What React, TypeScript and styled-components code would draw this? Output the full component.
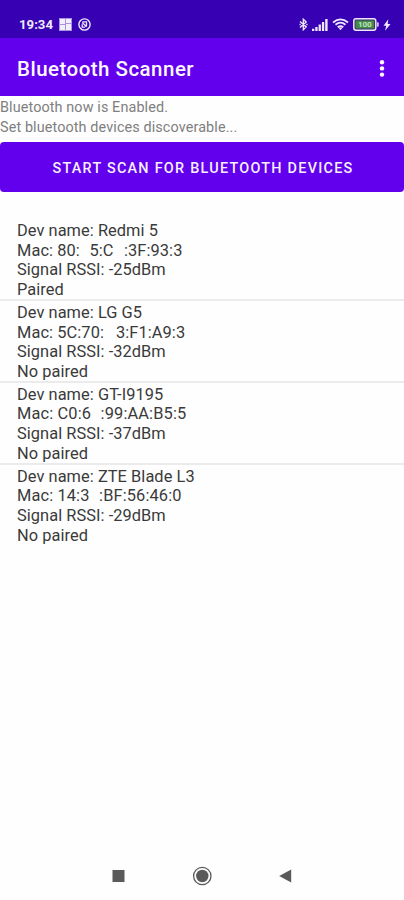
import React from "react";
import styled, { createGlobalStyle } from "styled-components";

const GlobalStyle = createGlobalStyle`
  * { box-sizing: border-box; }
  body { margin: 0; background: #fefefe; }
`;

const Screen = styled.div`
  width: 404px;
  height: 900px;
  display: flex;
  flex-direction: column;
  overflow: hidden;
  background: #fefefe;
  font-family: Roboto, sans-serif;
`;

const StatusBar = styled.header`
  height: 38px;
  flex: none;
  display: flex;
  align-items: center;
  justify-content: space-between;
  padding: 11px 13px 0 19px;
  background: #3700b3;
  color: #f0e8ff;
`;

const StatusGroup = styled.div<{ $gap: number }>`
  display: flex;
  align-items: center;
  gap: ${({ $gap }) => $gap}px;
  svg { display: block; flex: none; }
`;

const Clock = styled.span`
  width: 34px;
  font-size: 13.2px;
  font-weight: 700;
  line-height: 14px;
  white-space: nowrap;
`;

const AppBar = styled.div`
  height: 58px;
  flex: none;
  display: flex;
  align-items: center;
  justify-content: space-between;
  padding: 3px 19px 0 17px;
  background: #6200ee;
  color: #fdf8ff;
`;

const Title = styled.h1`
  margin: 0;
  padding-top: 1px;
  font-size: 20.5px;
  font-weight: 500;
  line-height: 28px;
  letter-spacing: 0.48px;
  white-space: nowrap;
`;

const MenuButton = styled.button`
  width: 6px;
  height: 20px;
  padding: 0;
  border: 0;
  background: none;
  color: inherit;
  svg { display: block; }
`;

const Messages = styled.div`
  height: 46px;
  flex: none;
  padding-top: 2px;
  color: #7f7f7f;
`;

const Message = styled.p`
  margin: 0;
  font-size: 14.4px;
  line-height: 20px;
  letter-spacing: 0.11px;
  white-space: nowrap;
`;

const ScanButton = styled.button`
  height: 50px;
  flex: none;
  border: 0;
  border-radius: 4px;
  padding: 3px 0 0 2px;
  background: #6200ee;
  color: #f8f0ff;
  font: 500 14.4px/20px Roboto, sans-serif;
  letter-spacing: 1.26px;
  text-transform: uppercase;
  white-space: nowrap;
`;

const DeviceList = styled.ul`
  flex: 1;
  margin: 27px 0 0;
  padding: 0;
  list-style: none;
`;

const Device = styled.li`
  height: 81.9px;
  padding: 2.1px 17px 0;
  border-bottom: 2px solid #ebebeb;
  color: #3a3a3a;
  &:last-child { border-bottom: 0; }
`;

const DeviceLine = styled.div<{ $spacing?: number }>`
  font-size: 16.4px;
  line-height: 19.6px;
  letter-spacing: ${({ $spacing = 0.05 }) => $spacing}px;
  white-space: pre;
`;

const MacGap = styled.span<{ $width: number }>`
  display: inline-block;
  width: ${({ $width }) => $width}px;
`;

const NavBar = styled.nav`
  height: 48px;
  flex: none;
  display: flex;
  justify-content: space-between;
  align-items: center;
  padding: 0 111px;
  color: #5a5a5a;
  svg { display: block; }
`;

type MacPart = string | number;

const devices: { name: string; mac: MacPart[]; macSpacing: number; rssi: number; paired: boolean }[] = [
  { name: "Redmi 5", mac: ["80:", 9.5, "5:C", 10.5, ":3F:93:3"], macSpacing: 0.08, rssi: -25, paired: true },
  { name: "LG G5", mac: ["5C:70:", 12, "3:F1:A9:3"], macSpacing: 0.08, rssi: -32, paired: false },
  { name: "GT-I9195", mac: ["C0:6", 9.5, ":99:AA:B5:5"], macSpacing: 0.13, rssi: -37, paired: false },
  { name: "ZTE Blade L3", mac: ["14:3", 9.5, ":BF:56:46:0"], macSpacing: 0.12, rssi: -29, paired: false },
];

const WindowsIcon = () => (
  <svg width="13" height="13" viewBox="0 0 13 13">
    <rect width="13" height="13" fill="#a993dc" />
    <path d="M1 1h5v5H1zM7 1h5v4H7zM1 7h5v5H1zM7 6h5v6H7z" fill="#f3edff" />
  </svg>
);

const RoundIcon = () => (
  <svg width="13" height="13" viewBox="0 0 13 13" fill="none" stroke="currentColor">
    <circle cx="6.5" cy="6.5" r="5.6" strokeWidth="1.4" />
    <path d="M4.4 3.9h4.1v4.3M4.2 4.5l4.4 4.2M4.2 6.2v2.9h3" strokeWidth="1.3" />
  </svg>
);

const BluetoothIcon = () => (
  <svg width="9" height="13" viewBox="0 0 9 13" fill="none" stroke="currentColor" strokeWidth="1.3">
    <path d="M1 3.5l6.2 5.4-2.9 2.9V1.2l2.9 2.7L1 9.5M.5 6.5h1.2M7.2 6.5h1.3" />
  </svg>
);

const SignalIcon = () => (
  <svg width="16" height="12" viewBox="0 0 16 12" fill="currentColor">
    <path d="M0 9.7h2.3V12H0zM3.3 8h2.3v4H3.3zM6.6 5.6h2.3V12H6.6zM9.9 3h2.3v9H9.9zM13.2 0h2.4v12h-2.4z" />
  </svg>
);

const WifiIcon = () => (
  <svg width="17" height="13" viewBox="0 0 17 13" fill="none" stroke="currentColor" strokeWidth="1.8">
    <path d="M1 4.5Q8.5-1.8 16 4.5M3.5 6.8Q8.5 2.5 13.5 6.8M5.7 9.2Q8.5 7 11.3 9.2" />
    <path d="M6.3 9.5L8.5 12.3 10.7 9.5Z" fill="currentColor" stroke="none" />
  </svg>
);

const BatteryText = styled.text`
  font: 700 8px Roboto, sans-serif;
`;

const BatteryIcon = () => (
  <svg width="26" height="13" viewBox="0 0 26 13">
    <rect x=".8" y=".8" width="22" height="11.4" rx="2.2" fill="#3f286f" stroke="#eee6ff" strokeWidth="1.5" />
    <rect x="2.5" y="2.5" width="18.6" height="8" fill="#438a4d" />
    <BatteryText x="11.8" y="9.4" textAnchor="middle" fill="#c5e3b9">100</BatteryText>
    <path d="M23.8 4.3h1q1 0 1 1v2.4q0 1-1 1h-1z" fill="#c9b9eb" />
  </svg>
);

const BoltIcon = () => (
  <svg width="8" height="12" viewBox="0 0 8 12" fill="currentColor">
    <path d="M5.3.3L.5 6.8h2.7L2.1 11.7 7.5 4.9H4.7z" />
  </svg>
);

export default function App() {
  return (
    <Screen>
      <GlobalStyle />
      <StatusBar>
        <StatusGroup $gap={6}>
          <Clock>19:34</Clock>
          <WindowsIcon />
          <RoundIcon />
        </StatusGroup>
        <StatusGroup $gap={4}>
          <BluetoothIcon />
          <SignalIcon />
          <WifiIcon />
          <BatteryIcon />
          <BoltIcon />
        </StatusGroup>
      </StatusBar>
      <AppBar>
        <Title>Bluetooth Scanner</Title>
        <MenuButton aria-label="More options">
          <svg width="6" height="20" viewBox="0 0 6 20" fill="currentColor">
            <circle cx="3" cy="3.2" r="2.2" />
            <circle cx="3" cy="9.4" r="2.2" />
            <circle cx="3" cy="15.6" r="2.2" />
          </svg>
        </MenuButton>
      </AppBar>
      <Messages>
        <Message>Bluetooth now is Enabled.</Message>
        <Message>Set bluetooth devices discoverable...</Message>
      </Messages>
      <ScanButton>Start scan for bluetooth devices</ScanButton>
      <DeviceList>
        {devices.map((device) => (
          <Device key={device.name}>
            <DeviceLine>Dev name: {device.name}</DeviceLine>
            <DeviceLine $spacing={device.macSpacing}>
              {"Mac: "}
              {device.mac.map((part, i) =>
                typeof part === "number" ? <MacGap key={i} $width={part} /> : part
              )}
            </DeviceLine>
            <DeviceLine>Signal RSSI: {device.rssi}dBm</DeviceLine>
            <DeviceLine>{device.paired ? "Paired" : "No paired"}</DeviceLine>
          </Device>
        ))}
      </DeviceList>
      <NavBar>
        <svg width="14" height="14" viewBox="0 0 14 14">
          <rect x="1.5" y="1" width="12" height="12" fill="currentColor" />
        </svg>
        <svg width="20" height="20" viewBox="0 0 20 20">
          <circle cx="10.3" cy="10" r="8.7" fill="none" stroke="currentColor" strokeWidth="1.3" />
          <circle cx="10.3" cy="10" r="6.2" fill="currentColor" />
        </svg>
        <svg width="14" height="14" viewBox="0 0 14 14">
          <path d="M12.2.5v13L.2 7z" fill="currentColor" />
        </svg>
      </NavBar>
    </Screen>
  );
}
